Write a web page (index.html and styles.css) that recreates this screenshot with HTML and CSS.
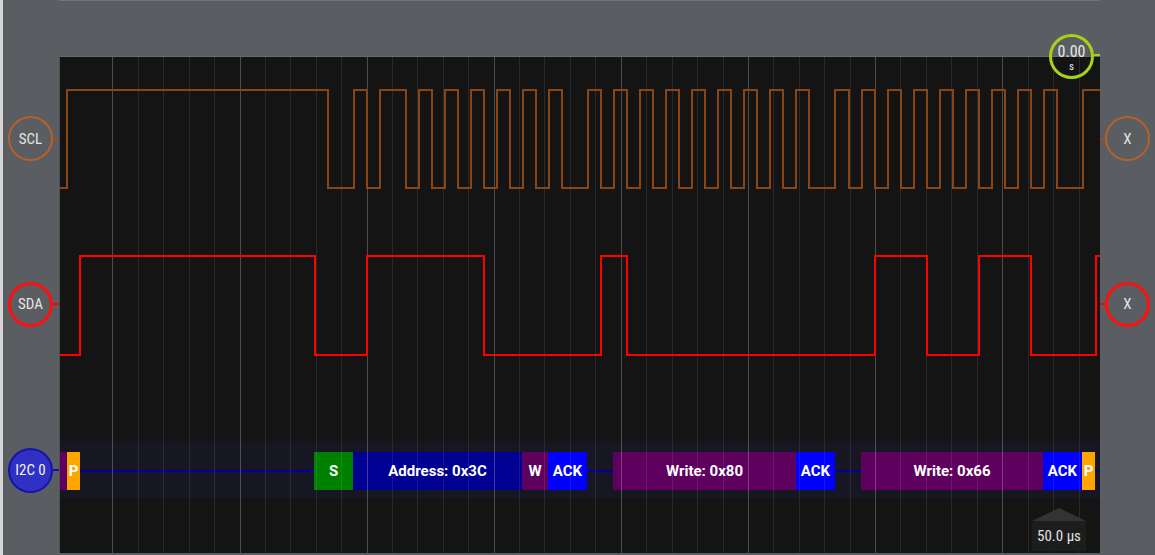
FILE: index.html
```html
<!DOCTYPE html>
<html>
<head>
<meta charset="utf-8">
<link rel="stylesheet" href="styles.css">
</head>
<body>
<div class="scope">
  <div class="topbar"></div>

  <div class="gutter left">
    <div class="lane lane-scl"><div class="chan chan-scl">SCL</div><div class="stub stub-scl"></div></div>
    <div class="lane lane-sda"><div class="chan chan-sda">SDA</div><div class="stub stub-sda"></div></div>
    <div class="lane lane-i2c"><div class="chan chan-i2c">I2C 0</div><div class="stub stub-i2c"></div></div>
  </div>

  <div class="plot">
    <svg class="grid" width="1040" height="496" viewBox="60 57 1040 496">
      <g class="minor">
        <line x1="138.5" y1="57" x2="138.5" y2="553"/><line x1="163.5" y1="57" x2="163.5" y2="553"/><line x1="189.5" y1="57" x2="189.5" y2="553"/><line x1="214.5" y1="57" x2="214.5" y2="553"/>
        <line x1="265.5" y1="57" x2="265.5" y2="553"/><line x1="290.5" y1="57" x2="290.5" y2="553"/><line x1="316.5" y1="57" x2="316.5" y2="553"/><line x1="341.5" y1="57" x2="341.5" y2="553"/>
        <line x1="392.5" y1="57" x2="392.5" y2="553"/><line x1="417.5" y1="57" x2="417.5" y2="553"/><line x1="443.5" y1="57" x2="443.5" y2="553"/><line x1="468.5" y1="57" x2="468.5" y2="553"/>
        <line x1="519.5" y1="57" x2="519.5" y2="553"/><line x1="544.5" y1="57" x2="544.5" y2="553"/><line x1="570.5" y1="57" x2="570.5" y2="553"/><line x1="595.5" y1="57" x2="595.5" y2="553"/>
        <line x1="646.5" y1="57" x2="646.5" y2="553"/><line x1="672.5" y1="57" x2="672.5" y2="553"/><line x1="697.5" y1="57" x2="697.5" y2="553"/><line x1="723.5" y1="57" x2="723.5" y2="553"/>
        <line x1="773.5" y1="57" x2="773.5" y2="553"/><line x1="799.5" y1="57" x2="799.5" y2="553"/><line x1="824.5" y1="57" x2="824.5" y2="553"/><line x1="850.5" y1="57" x2="850.5" y2="553"/>
        <line x1="900.5" y1="57" x2="900.5" y2="553"/><line x1="926.5" y1="57" x2="926.5" y2="553"/><line x1="951.5" y1="57" x2="951.5" y2="553"/><line x1="977.5" y1="57" x2="977.5" y2="553"/>
        <line x1="1028.5" y1="57" x2="1028.5" y2="553"/><line x1="1053.5" y1="57" x2="1053.5" y2="553"/><line x1="1079.5" y1="57" x2="1079.5" y2="553"/>
      </g>
      <g class="major">
        <line x1="112.5" y1="57" x2="112.5" y2="553"/><line x1="240.5" y1="57" x2="240.5" y2="553"/><line x1="367.5" y1="57" x2="367.5" y2="553"/><line x1="494.5" y1="57" x2="494.5" y2="553"/>
        <line x1="621.5" y1="57" x2="621.5" y2="553"/><line x1="748.5" y1="57" x2="748.5" y2="553"/><line x1="875.5" y1="57" x2="875.5" y2="553"/><line x1="1002.5" y1="57" x2="1002.5" y2="553"/>
      </g>
    </svg>

    <div class="lanes">
      <div class="lane-scl">
        <svg class="wave" width="1040" height="164" viewBox="60 57 1040 164">
          <path class="scl" d="M59 188 H67 V90 H328 V188 H354 V90 H367 V188 H380 V90 H406 V188 H419 V90 H432 V188 H445 V90 H458 V188 H471 V90 H484 V188 H497 V90 H510 V188 H523 V90 H536 V188 H549 V90 H562 V188 H588 V90 H601 V188 H614 V90 H627 V188 H640 V90 H653 V188 H666 V90 H679 V188 H692 V90 H705 V188 H718 V90 H731 V188 H744 V90 H757 V188 H770 V90 H783 V188 H796 V90 H809 V188 H835 V90 H849 V188 H862 V90 H875 V188 H888 V90 H901 V188 H914 V90 H927 V188 H940 V90 H953 V188 H966 V90 H979 V188 H992 V90 H1005 V188 H1018 V90 H1031 V188 H1044 V90 H1057 V188 H1083 V90 H1101"/>
        </svg>
      </div>
      <div class="lane-sda">
        <svg class="wave" width="1040" height="166" viewBox="60 221 1040 166">
          <path class="sda" d="M59 355 H80 V256 H315 V355 H367 V256 H484 V355 H601 V256 H627 V355 H875 V256 H927 V355 H979 V256 H1031 V355 H1096 V256 H1101"/>
        </svg>
      </div>
      <div class="lane-i2c">
        <div class="band">
          <div class="frames">
            <div class="frame f-data" style="width:7px"></div>
            <div class="frame f-stop" style="width:13px">P</div>
            <div class="gap" style="width:234px"></div>
            <div class="frame f-start" style="width:39px">S</div>
            <div class="frame f-addr" style="width:169px">Address: 0x3C</div>
            <div class="frame f-data" style="width:26px">W</div>
            <div class="frame f-ack" style="width:39px">ACK</div>
            <div class="gap" style="width:26px"></div>
            <div class="frame f-data" style="width:183px">Write: 0x80</div>
            <div class="frame f-ack" style="width:39px">ACK</div>
            <div class="gap" style="width:26px"></div>
            <div class="frame f-data" style="width:182px">Write: 0x66</div>
            <div class="frame f-ack" style="width:39px">ACK</div>
            <div class="frame f-stop" style="width:13px">P</div>
            <div class="gap" style="width:5px"></div>
          </div>
        </div>
      </div>
    </div>

    <div class="cursor">
      <div class="cursor-ring"><span class="cursor-val">0.00</span><span class="cursor-unit">s</span></div>
      <div class="cursor-stub"></div>
    </div>

    <div class="scale">
      <div class="scale-arrow"></div>
      <div class="scale-box">50.0 µs</div>
    </div>
  </div>

  <div class="gutter right">
    <div class="lane lane-scl"><div class="stub stub-scl"></div><div class="chan chan-scl">X</div></div>
    <div class="lane lane-sda"><div class="stub stub-sda"></div><div class="chan chan-sda">X</div></div>
    <div class="lane lane-i2c"></div>
  </div>
</div>
</body>
</html>
```

FILE: styles.css
```css
html, body {
  margin: 0;
  padding: 0;
}

body {
  width: 1155px;
  height: 555px;
  overflow: hidden;
  background: #5a5d61;
  font-family: "Liberation Sans Narrow", "Roboto Condensed", "Roboto", sans-serif;
}

.scope {
  display: grid;
  grid-template-columns: 56px 1041px 55px;
  grid-template-rows: 56px 497px 2px;
  height: 555px;
  box-sizing: border-box;
  border-left: 3px solid #d6d6d6;
}

.topbar {
  grid-column: 2;
  grid-row: 1;
  border-top: 1px solid #747474;
}

.gutter {
  grid-row: 2;
  display: flex;
  flex-direction: column;
}

.gutter.left { grid-column: 1; }
.gutter.right { grid-column: 3; }

.gutter .lane {
  display: flex;
  align-items: center;
}

.gutter .lane-scl { height: 165px; }
.gutter .lane-sda { height: 166px; }
.gutter .lane-i2c { height: 166px; }

.gutter.left .lane { padding-left: 5px; }

.chan {
  width: 45px;
  height: 45px;
  box-sizing: border-box;
  border-radius: 50%;
  border: 2px solid;
  display: flex;
  align-items: center;
  justify-content: center;
  color: #e4e4e4;
  font-size: 15px;
  flex: none;
}

.chan-scl { border-color: #b4622a; }
.chan-sda { border-color: #ff1010; border-width: 3px; }
.chan-i2c {
  border-color: #1414a8;
  background: #3030c4;
  color: #f4f4f4;
  font-size: 15px;
}

.stub {
  height: 2px;
  flex: 1;
}

.gutter.right .stub { flex: none; width: 5px; }

.stub-scl { background: #a0521d; }
.stub-sda { background: #ff0000; }
.stub-i2c { background: #1414a8; }

.plot {
  grid-column: 2;
  grid-row: 2;
  position: relative;
  background: #141414;
  border-top: 1px solid #6a6a6a;
  border-left: 1px solid #505050;
}

.grid {
  position: absolute;
  left: 0;
  top: 0;
  display: block;
  shape-rendering: crispEdges;
}

.grid .minor line { stroke: rgba(255, 255, 255, 0.09); stroke-width: 1; }
.grid .major line { stroke: rgba(255, 255, 255, 0.24); stroke-width: 1; }

.lanes {
  display: flex;
  flex-direction: column;
  height: 100%;
}

.lane-scl, .lane-sda { position: relative; }
.lanes .lane-scl { height: 164px; }
.lanes .lane-sda { height: 166px; }
.lanes .lane-i2c { flex: 1; padding-top: 54px; box-sizing: border-box; }

.wave {
  display: block;
  position: relative;
  shape-rendering: crispEdges;
}

.wave path {
  fill: none;
  stroke-width: 2;
}

.wave .scl { stroke: #8b4513; }
.wave .sda { stroke: #ff0000; }

.band {
  height: 57px;
  box-sizing: border-box;
  padding-top: 11px;
  background: #161723;
}

.frames {
  display: flex;
  height: 38px;
  background: linear-gradient(#0000a0, #0000a0) 0 18px / 100% 2px no-repeat;
}

.frame {
  flex: none;
  display: flex;
  align-items: center;
  justify-content: center;
  color: #ffffff;
  font-family: "Roboto", "Liberation Sans", sans-serif;
  font-weight: 700;
  font-size: 15px;
  white-space: nowrap;
  overflow: hidden;
}

.gap { flex: none; }

.f-data { background: #5e005e; }
.f-stop { background: #ffa500; }
.f-start { background: #008000; }
.f-addr { background: #000092; }
.f-ack { background: #0000ff; }

.cursor {
  position: absolute;
  left: 989px;
  top: -23px;
  display: flex;
  align-items: center;
}

.cursor-ring {
  width: 45px;
  height: 45px;
  box-sizing: border-box;
  border: 3px solid #a6d318;
  border-radius: 50%;
  display: flex;
  flex-direction: column;
  align-items: center;
  justify-content: center;
  color: #e8e8e8;
  line-height: 1;
}

.cursor-val { font-size: 16px; margin-top: 2px; }
.cursor-unit { font-size: 11px; margin-top: 1px; }

.cursor-stub {
  width: 6px;
  height: 2px;
  margin-top: -3px;
  background: #a6d318;
}

.scale {
  position: absolute;
  left: 972px;
  top: 451px;
  display: flex;
  flex-direction: column;
  align-items: center;
}

.scale-arrow {
  width: 0;
  height: 0;
  border-left: 27px solid transparent;
  border-right: 27px solid transparent;
  border-bottom: 13px solid #333333;
}

.scale-box {
  width: 54px;
  height: 30px;
  background: #1d1d1d;
  color: #e2e2e2;
  font-size: 15px;
  display: flex;
  align-items: center;
  justify-content: center;
}
```
